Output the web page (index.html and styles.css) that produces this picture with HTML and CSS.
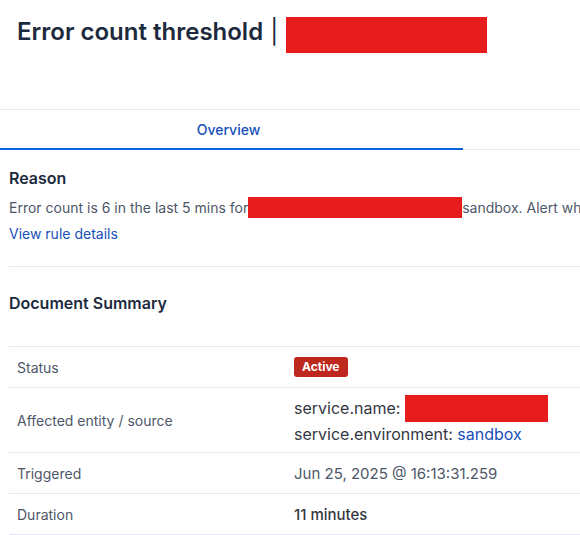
FILE: index.html
```html
<html>
    <head>
        <title>Error count threshold</title>
        <meta name="viewport" content="width=device-width, initial-scale=1.0">
        <link rel="stylesheet" href="styles.css">
    </head>
    <body>
        <div class="page">
            <div class="header">
                <h1 class="title">Error count threshold <span class="sep">|</span></h1>
                <span class="redact redact-title"></span>
            </div>

            <div class="tabs">
                <div class="tab active">Overview</div>
            </div>

            <div class="content">
                <div class="reason">
                    <h3>Reason</h3>
                    <p class="reason-text">Error count is 6 in the last 5 mins for<span class="redact redact-reason"></span>sandbox. Alert when &gt; 5.</p>
                    <a href="#" class="link">View rule details</a>
                </div>

                <hr class="divider">

                <h3 class="summary-title">Document Summary</h3>

                <table class="summary">
                    <tr>
                        <td class="label">Status</td>
                        <td><span class="badge">Active</span></td>
                    </tr>
                    <tr class="tall">
                        <td class="label">Affected entity / source</td>
                        <td class="entity">
                            <div>service.name: <span class="redact redact-name"></span></div>
                            <div>service.environment: <a href="#" class="link">sandbox</a></div>
                        </td>
                    </tr>
                    <tr>
                        <td class="label">Triggered</td>
                        <td class="value">Jun 25, 2025 @ 16:13:31.259</td>
                    </tr>
                    <tr>
                        <td class="label">Duration</td>
                        <td class="value strong">11 minutes</td>
                    </tr>
                </table>
            </div>
        </div>
    </body>
</html>
```

FILE: styles.css
```css
body {
    margin: 0;
    background-color: #fff;
    font-family: Inter, 'Noto Sans', sans-serif;
    color: #1d2a3e;
    overflow: hidden;
}
.page {
    width: 926px;
}
.header {
    display: flex;
    align-items: flex-start;
    padding: 17px 17px 0 17px;
    height: 92px;
}
.title {
    margin: 0;
    font-size: 24px;
    font-weight: 600;
    line-height: 30px;
    color: #1d2a3e;
    white-space: nowrap;
}
.sep {
    font-weight: 400;
    margin-left: 1px;
}
.redact {
    display: inline-block;
    background-color: #e71d1d;
}
.redact-title {
    width: 201px;
    height: 36px;
    margin-left: 8px;
}
.tabs {
    display: flex;
    border-top: 1px solid #e3e8f2;
    border-bottom: 1px solid #e3e8f2;
}
.tab {
    height: 38px;
    line-height: 40px;
    padding-right: 6px;
    text-align: center;
    font-size: 14px;
    font-weight: 500;
    color: #1750ba;
}
.tab.active {
    width: 457px;
    border-bottom: 2px solid #0b64dd;
    margin-bottom: -1px;
}
.content {
    padding: 0 9px;
}
h3 {
    margin: 0;
    font-size: 16px;
    font-weight: 600;
    color: #1d2a3e;
}
.reason {
    padding-top: 18px;
}
.reason-text {
    margin: 8px 0 0 0;
    font-size: 14px;
    line-height: 24px;
    color: #4e5768;
    white-space: nowrap;
}
.redact-reason {
    width: 214px;
    height: 21px;
    vertical-align: -5px;
}
.link {
    display: inline-block;
    font-size: 14px;
    color: #1750ba;
    text-decoration: none;
}
.reason .link {
    margin-top: 5px;
}
.divider {
    border: none;
    border-top: 1px solid #e3e8f2;
    margin: 24px 0 0 0;
}
.summary-title {
    padding-top: 26px;
}
.summary {
    margin-top: 33px;
    width: 100%;
    border-collapse: collapse;
    border-top: 1px solid #e3e8f2;
    font-size: 14px;
}
.summary td {
    border-bottom: 1px solid #e3e8f2;
    height: 41px;
    padding: 0 8px;
    vertical-align: middle;
}
.summary td.label {
    width: 261px;
    color: #4e5768;
}
.summary tr.tall td {
    height: 65px;
}
.badge {
    display: inline-block;
    background-color: #bd271e;
    color: #fff;
    font-size: 12px;
    font-weight: 700;
    padding: 0 8px;
    height: 20px;
    line-height: 20px;
    border-radius: 3px;
}
.entity {
    font-size: 16px;
    line-height: 24px;
    color: #343741;
}
.entity .link {
    font-size: 16px;
}
.redact-name {
    width: 143px;
    height: 27px;
    vertical-align: -8px;
}
.value {
    font-size: 15px;
    color: #4e5768;
}
.value.strong {
    color: #343741;
    font-weight: 500;
}
```
